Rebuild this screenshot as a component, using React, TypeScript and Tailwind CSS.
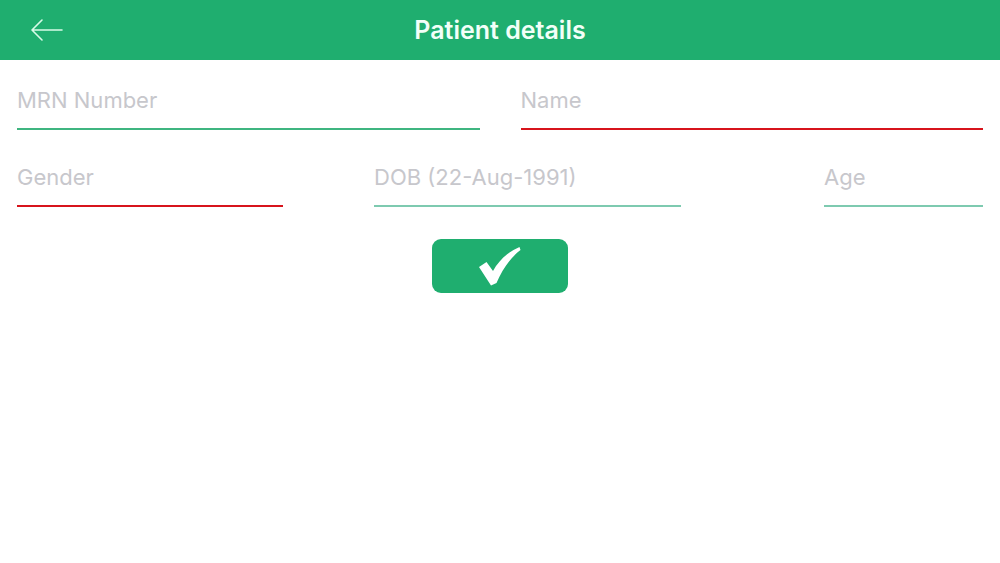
const Field = ({
  label,
  line,
  className,
}: {
  label: string;
  line: string;
  className: string;
}) => (
  <div className={className}>
    <div className={`h-[46px] pt-[1px] text-[22px] leading-[30px] text-[#c7c7cc] border-b-2 ${line}`}>
      {label}
    </div>
  </div>
);

export default function App() {
  return (
    <div className="w-[1000px] h-[563px] bg-white font-['Inter','Liberation_Sans',sans-serif]">
      <div className="relative h-[60px] bg-[#1fae6f] flex items-center justify-center">
        <button className="absolute left-[30px] top-[17px] w-[36px] h-[26px] flex items-center">
          <svg width="34" height="24" viewBox="0 0 34 24" fill="none">
            <path
              d="M32 12H3M12 2L2 12l10 10"
              stroke="#d8fbe8"
              strokeWidth="1.6"
              strokeLinecap="round"
              strokeLinejoin="round"
            />
          </svg>
        </button>
        <h1 className="text-[25px] leading-[30px] font-semibold text-[#f2fff8]">Patient details</h1>
      </div>

      <div className="px-[17px] pt-[24px]">
        <div className="flex gap-[41px]">
          <Field label="MRN Number" line="border-[#3fb580]" className="flex-1" />
          <Field label="Name" line="border-[#d7141c]" className="flex-1" />
        </div>
        <div className="flex mt-[31px]">
          <Field label="Gender" line="border-[#d7141c]" className="w-[266px]" />
          <Field label="DOB (22-Aug-1991)" line="border-[#7ecab0]" className="w-[307px] ml-[91px]" />
          <Field label="Age" line="border-[#7ecab0]" className="w-[159px] ml-auto" />
        </div>
        <div className="flex justify-center mt-[32px]">
          <button className="w-[136px] h-[54px] rounded-[9px] bg-[#1fae6f] flex items-center justify-center">
            <svg width="42" height="40" viewBox="0 0 42 40">
              <path
                d="M0 21 L7.5 16 L14 25 C20 14 29 6 40.5 1 L41.5 4 C31 12 23 24 17.5 37 L12 39.5 Z"
                fill="#ffffff"
              />
            </svg>
          </button>
        </div>
      </div>
    </div>
  );
}
